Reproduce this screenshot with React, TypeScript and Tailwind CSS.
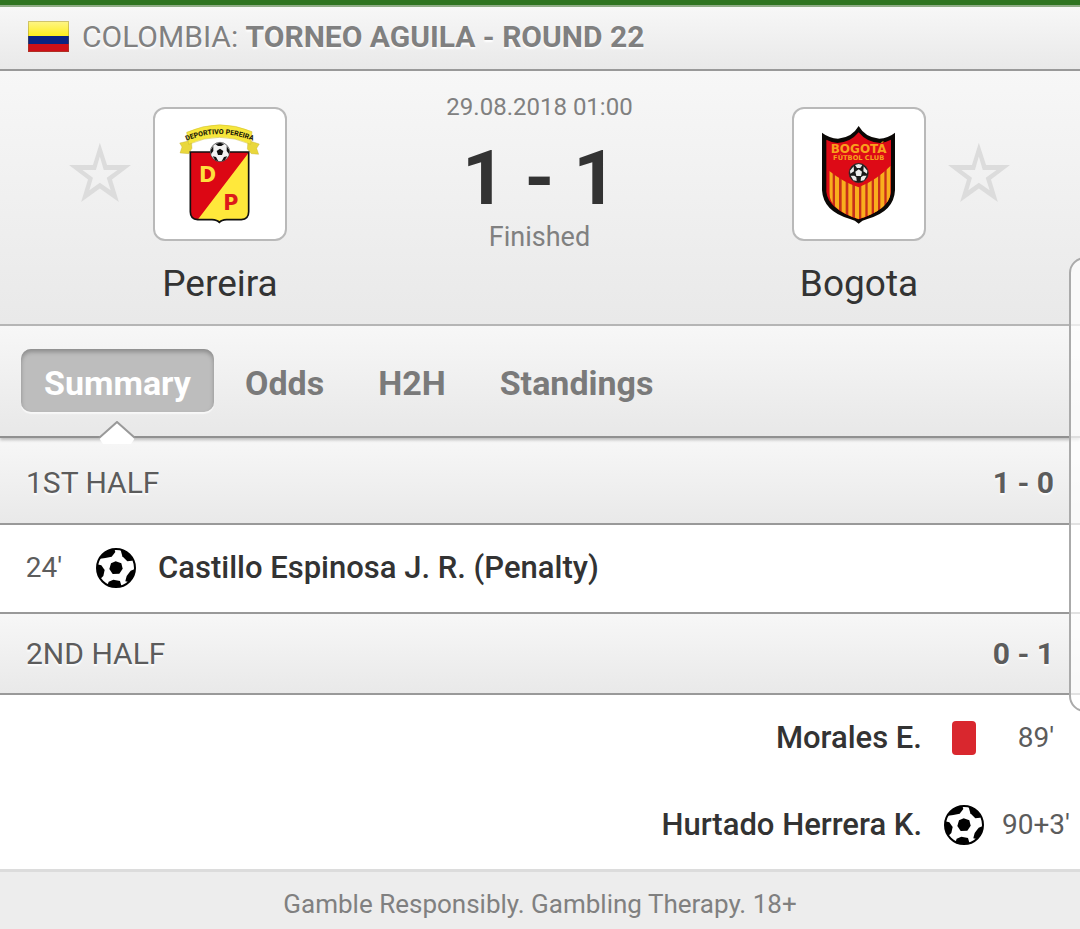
import React, { useState } from 'react';

type Side = 'home' | 'away';
type EventKind = 'goal' | 'red';

interface MatchEvent {
    side: Side;
    kind: EventKind;
    minute: string;
    player: string;
}

interface Period {
    name: string;
    score: string;
    events: MatchEvent[];
}

const PERIODS: Period[] = [
    {
        name: '1ST HALF',
        score: '1 - 0',
        events: [{ side: 'home', kind: 'goal', minute: "24'", player: 'Castillo Espinosa J. R. (Penalty)' }],
    },
    {
        name: '2ND HALF',
        score: '0 - 1',
        events: [
            { side: 'away', kind: 'red', minute: "89'", player: 'Morales E.' },
            { side: 'away', kind: 'goal', minute: "90+3'", player: 'Hurtado Herrera K.' },
        ],
    },
];

const TABS = ['Summary', 'Odds', 'H2H', 'Standings'];

const ColombiaFlag: React.FC = () => (
    <svg viewBox="0 0 41 31" className="h-[31px] w-[41px] shrink-0" role="img" aria-label="Colombia">
        <defs>
            <linearGradient id="flagYellow" x1="0" y1="0" x2="0" y2="1">
                <stop offset="0" stopColor="#fdf58a" />
                <stop offset="1" stopColor="#ffee1c" />
            </linearGradient>
        </defs>
        <rect width="41" height="15" fill="url(#flagYellow)" />
        <rect y="15" width="41" height="8" fill="#0a2382" />
        <rect y="23" width="41" height="8" fill="#ce1018" />
        <rect x="0.5" y="0.5" width="40" height="30" fill="none" stroke="#7c6a3a" strokeOpacity="0.35" />
    </svg>
);

const BallIcon: React.FC = () => (
    <svg viewBox="0 0 120 120" className="h-10 w-10" role="img" aria-label="Goal">
        <defs>
            <clipPath id="ballClip">
                <circle cx="60" cy="60" r="57" />
            </clipPath>
        </defs>
        <circle cx="60" cy="60" r="57" fill="#fff" />
        <g clipPath="url(#ballClip)" fill="#000">
            <path d="M59 40L76 46L80 62L70 77L50 78L40 63L45 46Z" />
            <path d="M12 32L28 30L47 26L58 12L54 0H20Z" />
            <path d="M74 6L79 25L94 40L108 38L120 30L90 0Z" />
            <path d="M120 62L104 68L92 84L88 100L108 104L120 84Z" />
            <path d="M32 120L38 101L52 95L72 99L78 120Z" />
            <path d="M0 48L16 52L26 66L22 84L12 94L0 88Z" />
        </g>
        <circle cx="60" cy="60" r="57" fill="none" stroke="#000" strokeWidth="6" />
    </svg>
);

const RedCard: React.FC = () => (
    <span role="img" aria-label="Red card" className="block h-[34px] w-6 rounded bg-[#d9272e]" />
);

// small ball that sits on both club crests
const CrestBall: React.FC<{ x: number; y: number; dark?: boolean }> = ({ x, y, dark }) => (
    <g transform={`translate(${x} ${y})`}>
        <circle r="29" fill={dark ? '#1a1a1a' : '#f2f2f2'} stroke="#333" strokeWidth="2" />
        {dark ? (
            <g fill="#ececec">
                <path d="M0 -11L10 -4L7 9H-7L-10 -4Z" />
                <path d="M-11 -24L0 -27L11 -24L5 -15H-5Z" />
                <path d="M15 -20L26 -7L25 2L14 -5Z" />
                <path d="M-15 -20L-26 -7L-25 2L-14 -5Z" />
                <path d="M13 8L24 8L16 22L6 24L7 13Z" />
                <path d="M-13 8L-24 8L-16 22L-6 24L-7 13Z" />
            </g>
        ) : (
            <g fill="#111">
                <path d="M0 -10L10 -3L6 9H-6L-10 -3Z" />
                <path d="M-14 -24L0 -28L13 -24L4 -18H-6Z" />
                <path d="M20 -18L28 -6L27 6L20 -3Z" />
                <path d="M-20 -18L-28 -6L-27 6L-20 -3Z" />
                <path d="M12 15L22 13L14 25L5 28Z" />
                <path d="M-12 15L-22 13L-14 25L-5 28Z" />
            </g>
        )}
    </g>
);

const PereiraCrest: React.FC = () => (
    <svg viewBox="315 42 390 390" className="h-full w-full" role="img" aria-label="Deportivo Pereira crest">
        <defs>
            <path id="ribbonText" d="M406 139Q508 95 612 139" />
        </defs>
        <path d="M424 136L389 144L396 156L390 174L416 176L426 160Z" fill="#e9d73c" stroke="#b9a62c" strokeWidth="1" />
        <path d="M594 136L628 147L620 160L626 178L604 176L592 162Z" fill="#e9d73c" stroke="#b9a62c" strokeWidth="1" />
        <path d="M410 112Q508 68 606 110L602 148Q508 106 416 148Z" fill="#f6e63c" stroke="#cdbb30" strokeWidth="1.5" />
        <text fontFamily="Roboto, sans-serif" fontSize="21" fontWeight="800" fill="#1d1a08">
            <textPath href="#ribbonText" startOffset="50%" textAnchor="middle">DEPORTIVO PEREIRA</textPath>
        </text>
        <path d="M421 171H596V350Q596 372 574 374H530Q514 375 508 382Q502 375 486 374H443Q421 372 421 350Z" fill="#dc0714" />
        <path d="M596 173V350Q596 372 574 374H530Q514 375 508 382Q502 375 486 374H443Z" fill="#ffe83b" />
        <path d="M421 171H596V350Q596 372 574 374H530Q514 375 508 382Q502 375 486 374H443Q421 372 421 350Z" fill="none" stroke="#111" strokeWidth="5" />
        <CrestBall x={510} y={171} />
        <text x="447" y="262" fontFamily="'DejaVu Sans', sans-serif" fontSize="62" fontWeight="700" fill="#ffdf3d">D</text>
        <text x="520" y="346" fontFamily="'DejaVu Sans', sans-serif" fontSize="62" fontWeight="700" fill="#dc1a1a">P</text>
    </svg>
);

const BogotaCrest: React.FC = () => (
    <svg viewBox="42 42 390 390" className="h-full w-full" role="img" aria-label="Bogota Futbol Club crest">
        <defs>
            <clipPath id="bogotaStripes">
                <path d="M148 228Q190 262 236 277Q290 255 332 212V294Q326 345 236 372Q148 345 148 294Z" />
            </clipPath>
        </defs>
        <path d="M236 93Q256 128 298 131Q324 130 345 113V286Q342 350 262 372Q246 376 236 386Q226 376 210 372Q130 350 126 286V113Q148 130 174 131Q216 128 236 93Z" fill="#0b0806" />
        <path d="M236 112Q260 142 300 144Q318 142 333 134V290Q328 342 236 373Q144 342 139 290V134Q154 142 172 144Q212 142 236 112Z" fill="#dd0a16" />
        <g clipPath="url(#bogotaStripes)">
            <path d="M138 200H340V380H138Z" fill="#c8301a" />
            <path
                d="M152 200V380M171 200V380M191 200V380M211 200V380M231 200V380M250 200V380M269 200V380M288 200V380M307 200V380M326 200V380"
                stroke="#f9ae1d"
                strokeWidth="12"
            />
        </g>
        <text x="236" y="174" textAnchor="middle" fontFamily="'DejaVu Sans', sans-serif" fontSize="36" fontWeight="700" fill="#f8a01c">BOGOTÁ</text>
        <text x="236" y="195" textAnchor="middle" fontFamily="'DejaVu Sans', sans-serif" fontSize="20" fontWeight="700" fill="#f8a01c">FÚTBOL CLUB</text>
        <CrestBall x={236} y={234} dark />
    </svg>
);

const FavoriteStar: React.FC<{ team: string }> = ({ team }) => {
    const [active, setActive] = useState<boolean>(false);

    return (
        <button
            type="button"
            aria-label={`Add ${team} to favorites`}
            aria-pressed={active}
            onClick={() => setActive(!active)}
            className={active ? 'text-yellow-400' : 'text-[#dcdcdc]'}
        >
            <svg viewBox="0 0 189 182" className="mb-1 h-[61px] w-[62px]" fill="currentColor" fillRule="evenodd">
                <path d="M94 0L116 68H189L131 112L152 181L94 140L37 181L58 112L0 68H73ZM94 42L82 83H41L73 107L62 145L94 122L127 145L115 107L148 83H106Z" />
            </svg>
        </button>
    );
};

const TeamLogo: React.FC<{ children: React.ReactNode }> = ({ children }) => (
    <div className="h-[134px] w-[134px] rounded-xl border-2 border-[#b9b9b9] bg-white">{children}</div>
);

const EventRow: React.FC<{ event: MatchEvent }> = ({ event }) => (
    <li className={`flex h-[87px] items-center px-[10px] pb-px ${event.side === 'away' ? 'flex-row-reverse' : ''}`}>
        <span className="w-[68px] text-center text-[28px] whitespace-nowrap text-[#5c5c5c]">{event.minute}</span>
        <span className="mx-[18px] flex w-10 justify-center">{event.kind === 'goal' ? <BallIcon /> : <RedCard />}</span>
        <span className="mx-1 pt-px text-[31px] font-medium text-[#333]">{event.player}</span>
    </li>
);

const App: React.FC = () => {
    const [activeTab, setActiveTab] = useState<string>('Summary');

    return (
        <div className="relative min-h-screen overflow-hidden bg-white font-[Roboto,'Noto_Sans',sans-serif]">
            <div className="h-[7px] border-b-2 border-[#8fab86] bg-[#2f7421]" />

            <header className="flex h-16 items-center gap-[13px] border-b-2 border-[#999] bg-linear-to-b from-[#f7f7f7] to-[#e9e9e9] px-7 pb-1">
                <ColombiaFlag />
                <h1 className="pt-px text-[30px] text-[#808080] [text-shadow:0_2px_2px_#fff]">
                    COLOMBIA: <span className="font-bold">TORNEO AGUILA - ROUND 22</span>
                </h1>
            </header>

            <section className="flex h-[255px] items-start justify-between border-b-2 border-[#b5b5b5] bg-linear-to-b from-[#f7f7f7] to-[#e9e9e9] pt-9 pr-[70px] pl-[69px]">
                <div className="grid grid-cols-[62px_134px] items-center gap-x-[22px] gap-y-5">
                    <FavoriteStar team="Pereira" />
                    <TeamLogo><PereiraCrest /></TeamLogo>
                    <h2 className="col-start-2 text-center text-[37px] leading-[46px] text-[#333]">Pereira</h2>
                </div>

                <div className="-mt-4 flex flex-col items-center text-[#808080]">
                    <time dateTime="2018-08-29T01:00" className="text-[24px] leading-8">29.08.2018 01:00</time>
                    <p className="mt-3 text-[76px] leading-[86px] font-bold text-[#333]">1 - 1</p>
                    <p className="text-[27px] leading-8">Finished</p>
                </div>

                <div className="grid grid-cols-[134px_62px] items-center gap-x-[22px] gap-y-5">
                    <TeamLogo><BogotaCrest /></TeamLogo>
                    <FavoriteStar team="Bogota" />
                    <h2 className="text-center text-[37px] leading-[46px] text-[#333]">Bogota</h2>
                </div>
            </section>

            <nav className="relative z-10 flex h-28 gap-2 border-b-2 border-[#909090] bg-linear-to-b from-[#f7f7f7] to-[#e8e8e8] px-[21px] pt-[23px] shadow-[0_2px_3px_#bbb]">
                {TABS.map((tab) => (
                    <button
                        key={tab}
                        type="button"
                        onClick={() => setActiveTab(tab)}
                        className={`relative h-[63px] rounded-[10px] px-[23px] pt-1.5 text-[34px] font-bold ${
                            tab === activeTab
                                ? 'bg-[#bdbdbd] text-white shadow-[inset_0_3px_4px_#8c8c8c,0_2px_1px_#f8f8f8]'
                                : 'text-[#7a7a7a]'
                        }`}
                    >
                        {tab}
                        {tab === activeTab && (
                            <svg viewBox="0 0 38 24" className="absolute top-[72px] left-1/2 h-6 w-[38px] -translate-x-1/2">
                                <path d="M1 17L19 1L37 17L33 23H5Z" fill="#fff" />
                                <path d="M1 17L19 1L37 17" fill="none" stroke="#999" strokeWidth="2" />
                            </svg>
                        )}
                    </button>
                ))}
            </nav>

            <main>
                {PERIODS.map((period, i) => (
                    <section key={period.name}>
                        <div
                            className={`flex items-center justify-between border-b-2 border-[#999] bg-linear-to-b from-[#f7f7f7] to-[#e9e9e9] px-[26px] text-[30px] text-[#5c5c5c] [text-shadow:0_2px_2px_#fff] ${
                                i === 0 ? 'h-[87px] pt-1' : 'h-[83px] border-t-2'
                            }`}
                        >
                            <h3>{period.name}</h3>
                            <span className="font-bold">{period.score}</span>
                        </div>
                        <ul>
                            {period.events.map((event) => (
                                <EventRow key={event.minute} event={event} />
                            ))}
                        </ul>
                    </section>
                ))}
            </main>

            <footer className="flex h-[60px] items-center justify-center border-t-[3px] border-[#dcdcdc] bg-[#ededed] pt-2 text-[26px] text-[#808080]">
                Gamble Responsibly. Gambling Therapy. 18+
            </footer>

            {/* edge panel handle, floats over the page */}
            <div className="absolute top-[257px] -right-2 z-20 h-[455px] w-[19px] rounded-l-2xl border-2 border-[#aaa] bg-white/70" />
        </div>
    );
};

export default App;
